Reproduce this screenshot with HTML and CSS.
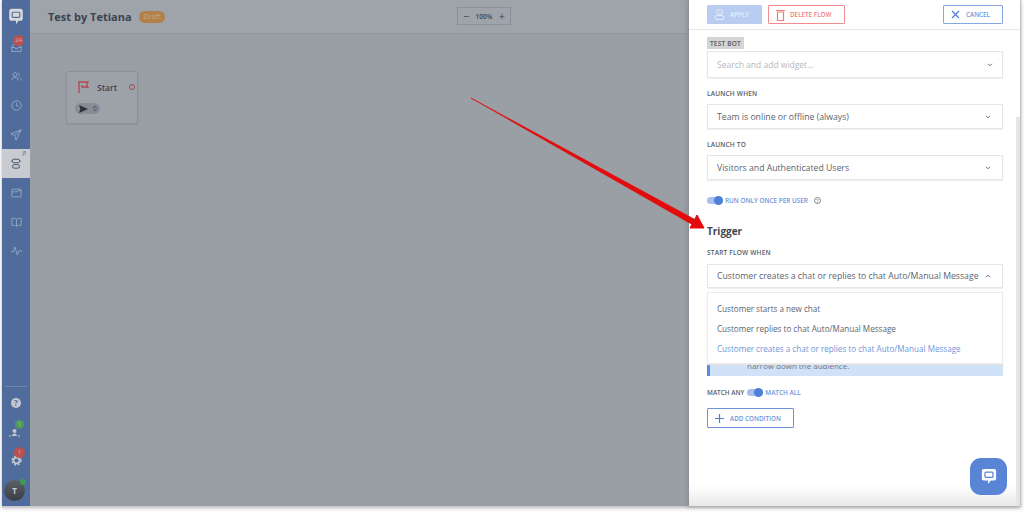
FILE: index.html
```html
<!DOCTYPE html>
<html>
<head>
  <meta charset="utf-8">
  <title>Test by Tetiana</title>
  <link rel="stylesheet" href="styles.css">
</head>
<body>
<div class="shot">

  <!-- left nav -->
  <div class="nav">
    <div class="nav-logo">
      <svg width="16" height="17" viewBox="0 0 18 20"><path d="M4 1h10a3 3 0 0 1 3 3v8a3 3 0 0 1-3 3h-2l-3 4v-4H4a3 3 0 0 1-3-3V4a3 3 0 0 1 3-3z" fill="#d5d8dc"/><rect x="4.500" y="5" width="9" height="6" rx="1" fill="none" stroke="#5a7196" stroke-width="1.400"/></svg>
    </div>
    <div class="nav-item">
      <svg width="11" height="11" viewBox="0 0 14 14" fill="none" stroke="#a5b3c9"><path d="M1 6l3-4h6l3 4v6H1zM1 7h4l1 2h2l1-2h4"/></svg>
      <span class="badge badge-red badge-inbox">24</span>
    </div>
    <div class="nav-item">
      <svg width="11" height="11" viewBox="0 0 14 14" fill="none" stroke="#a5b3c9"><circle cx="5" cy="4.500" r="2.500"/><path d="M1 12c0-3 2-4 4-4s4 1 4 4M9 2.200a2.500 2.500 0 0 1 0 4.600M11 8.500c1.300.5 2 1.600 2 3.500"/></svg>
    </div>
    <div class="nav-item">
      <svg width="11" height="11" viewBox="0 0 14 14" fill="none" stroke="#a5b3c9"><circle cx="7" cy="7" r="6"/><path d="M7 3.500V7l2.500 1.500"/></svg>
    </div>
    <div class="nav-item">
      <svg width="12" height="12" viewBox="0 0 15 15" fill="none" stroke="#a5b3c9"><path d="M14 1L1 6l5 2 1.500 6zM14 1L6 8"/></svg>
    </div>
    <div class="nav-item nav-active">
      <svg width="10" height="11" viewBox="0 0 14 15" fill="none" stroke="#4d5a6e" stroke-width="1.400"><rect x="2" y="1.500" width="10" height="5" rx="2"/><rect x="2" y="9" width="10" height="5" rx="2.500"/><path d="M0 4h2M12 4h2"/></svg>
      <span class="beta">&#946;</span>
    </div>
    <div class="nav-item">
      <svg width="11" height="10" viewBox="0 0 14 13" fill="none" stroke="#a5b3c9"><rect x="1" y="1.500" width="12" height="10" rx="1"/><path d="M1 5h7l1-1.500h4"/></svg>
    </div>
    <div class="nav-item">
      <svg width="11" height="10" viewBox="0 0 14 13" fill="none" stroke="#a5b3c9"><path d="M7 3C5.500 1.500 3 1.500 1 2v9c2-.5 4.500-.5 6 1 1.500-1.500 4-1.500 6-1V2c-2-.5-4.500-.5-6 1zM7 3v9"/></svg>
    </div>
    <div class="nav-item">
      <svg width="11" height="10" viewBox="0 0 14 12" fill="none" stroke="#a5b3c9"><path d="M0 7h3l2-6 3 10 2-5h4"/></svg>
    </div>

    <div class="nav-bottom">
      <div class="nav-small">
        <span class="help-dot">?</span>
      </div>
      <div class="nav-small">
        <svg class="person" width="11" height="8" viewBox="0 0 11 8" fill="#c3c8cf"><circle cx="5.500" cy="2" r="2"/><path d="M3 7c0-1.500 1-2.500 2.500-2.500S8 5.500 8 7zM0 6.500h2v1H0zM9 6.500h2v1H9z"/></svg>
        <span class="badge badge-green badge-low">1</span>
      </div>
      <div class="nav-small">
        <svg width="11" height="11" viewBox="0 0 13 13" fill="none" stroke="#c3c8cf"><circle cx="6.500" cy="6.500" r="3.500" stroke-width="2"/><circle cx="6.500" cy="6.500" r="5.200" stroke-width="1.800" stroke-dasharray="2.200 2"/></svg>
        <span class="badge badge-red badge-big">1</span>
      </div>
      <div class="avatar">T<span class="online"></span></div>
    </div>
  </div>

  <!-- flow editor -->
  <div class="editor">
    <div class="topbar">
      <span class="flow-title">Test by Tetiana</span>
      <span class="draft">Draft</span>
      <div class="zoom-box"><span class="zoom-sign">&minus;</span><span>100%</span><span class="zoom-sign">+</span></div>
    </div>
    <div class="canvas">
      <div class="node">
        <div class="node-head">
          <svg width="11" height="12" viewBox="0 0 11 12" fill="none" stroke="#b5474d" stroke-width="1.300"><path d="M1 12V1h9L8.500 3.500 10 6H4V4"/></svg>
          <span class="node-name">Start</span>
          <span class="node-port"></span>
        </div>
        <div class="node-stat">
          <svg width="9" height="8" viewBox="0 0 10 9" fill="#2e323a"><path d="M0 0l10 4.500L0 9l1.500-4.500z"/></svg>
          <span>0</span>
        </div>
      </div>
    </div>
  </div>

  <!-- settings panel -->
  <div class="panel">
    <div class="panel-head">
      <button class="btn btn-apply">
        <svg width="11" height="11" viewBox="0 0 11 11" fill="none" stroke="#e6edf9"><rect x="2.500" y="1" width="6" height="4" rx="1.500"/><rect x="1" y="6.500" width="9" height="4" rx="2"/></svg>
        APPLY
      </button>
      <button class="btn btn-delete">
        <svg width="9" height="12" viewBox="0 0 9 12" fill="none" stroke="#ef7c7c" stroke-width="1.200"><path d="M1.500 3h6v8.500h-6zM0 1.500h9"/></svg>
        DELETE FLOW
      </button>
      <button class="btn btn-cancel">
        <svg width="9" height="9" viewBox="0 0 9 9" fill="none" stroke="#4f7fd6" stroke-width="1.200"><path d="M1 1l7 7M8 1L1 8"/></svg>
        CANCEL
      </button>
    </div>

    <div class="panel-body">
      <div class="label label-tag">TEST BOT</div>
      <div class="select select-search">
        <span>Search and add widget...</span>
        <svg class="chev" width="6" height="4" viewBox="0 0 7 5" fill="none" stroke="#555c66" stroke-width="1.100"><path d="M1 1l2.500 2.500L6 1"/></svg>
      </div>

      <div class="label label-when">LAUNCH WHEN</div>
      <div class="select">
        <span>Team is online or offline (always)</span>
        <svg class="chev" width="6" height="4" viewBox="0 0 7 5" fill="none" stroke="#555c66" stroke-width="1.100"><path d="M1 1l2.500 2.500L6 1"/></svg>
      </div>

      <div class="label label-to">LAUNCH TO</div>
      <div class="select">
        <span>Visitors and Authenticated Users</span>
        <svg class="chev" width="6" height="4" viewBox="0 0 7 5" fill="none" stroke="#555c66" stroke-width="1.100"><path d="M1 1l2.500 2.500L6 1"/></svg>
      </div>

      <div class="toggle-row run-once">
        <span class="toggle"></span>
        <span class="toggle-on">RUN ONLY ONCE PER USER</span>
        <span class="hint">?</span>
      </div>

      <div class="section-title">Trigger</div>
      <div class="label label-start">START FLOW WHEN</div>
      <div class="select select-open">
        <span>Customer creates a chat or replies to chat Auto/Manual Message</span>
        <svg class="chev" width="6" height="4" viewBox="0 0 7 5" fill="none" stroke="#555c66" stroke-width="1.100"><path d="M1 4l2.500-2.500L6 4"/></svg>
      </div>

      <div class="dropdown-wrap">
        <div class="notice">narrow down the audience.</div>
        <div class="dropdown">
          <div class="option">Customer starts a new chat</div>
          <div class="option">Customer replies to chat Auto/Manual Message</div>
          <div class="option option-current">Customer creates a chat or replies to chat Auto/Manual Message</div>
        </div>
      </div>

      <div class="toggle-row match">
        <span class="match-any">MATCH ANY</span>
        <span class="toggle"></span>
        <span class="toggle-on">MATCH ALL</span>
      </div>

      <button class="btn btn-add">
        <svg width="9" height="9" viewBox="0 0 9 9" fill="none" stroke="#4f7fd6" stroke-width="1.200"><path d="M4.500 0v9M0 4.500h9"/></svg>
        ADD CONDITION
      </button>
    </div>
    <div class="scrollbar"></div>
  </div>

  <button class="chat-btn">
    <svg width="16" height="17" viewBox="0 0 18 19"><path d="M3 1h12a2 2 0 0 1 2 2v9a2 2 0 0 1-2 2h-4l-3 4v-4H3a2 2 0 0 1-2-2V3a2 2 0 0 1 2-2z" fill="#fff"/><rect x="4.500" y="4.500" width="9" height="6" rx="1" fill="none" stroke="#5a84d6" stroke-width="1.400"/></svg>
  </button>

  <!-- red annotation arrow -->
  <svg class="arrow" width="1024" height="512" viewBox="0 0 1024 512">
    <path d="M471 98 L695 219.500 L693 225 Z" fill="#e30b0b" stroke="#e30b0b" stroke-width="0.600"/>
    <path d="M697 215 L704 228 L690 228 Z" fill="#e30b0b" stroke="#e30b0b"/>
  </svg>
</div>
</body>
</html>
```

FILE: styles.css
```css
* { box-sizing: border-box; }

html, body { margin: 0; padding: 0; }

body { width: 1024px; height: 512px; overflow: hidden; background: #fbfbfb; font-family: "Open Sans", sans-serif; }

button { font-family: "Open Sans", sans-serif; }

.shot { position: relative; display: flex; width: 1019px; height: 507px; margin-left: 2px; background: #fff; border-bottom: 1px solid #c9c9c9; border-right: 1px solid #c9c9c9; box-shadow: 0 1px 3px #bbb; }

/* nav */
.nav { display: flex; flex-direction: column; width: 28px; flex: none; background: #4f6c9d; }
.nav-logo { display: flex; justify-content: center; align-items: center; height: 33px; }
.nav-item { position: relative; display: flex; justify-content: center; align-items: center; height: 29px; }
.nav-active { background: #c8cbcf; }
.beta { position: absolute; top: 0; right: 4px; font-size: 6px; color: #4f6c9d; }
.nav-bottom { margin: auto 3px 5px 3px; padding-top: 1px; border-top: 1px solid #6f86ab; }
.nav-small { position: relative; display: flex; justify-content: center; align-items: center; height: 29px; }
.help-dot { display: block; width: 10px; height: 10px; border-radius: 50%; background: #c3c8cf; color: #4f6c9d; font-size: 8px; line-height: 10px; font-weight: 700; text-align: center; }
.person { margin-left: -3px; margin-top: 3px; }

.badge { position: absolute; border-radius: 50%; color: #d8a9a5; font-size: 6px; text-align: center; }
.badge-red { background: #b9524f; }
.badge-green { background: #4f9a5e; color: #9fd0a8; }
.badge-inbox { top: 2px; left: 11px; width: 11px; height: 11px; line-height: 11px; }
.badge-low { top: 3px; left: 10px; width: 9px; height: 9px; line-height: 9px; }
.badge-big { top: 1px; left: 9px; width: 11px; height: 11px; line-height: 11px; }

.avatar { position: relative; width: 21px; height: 21px; margin: 5px 0 0 -1px; border-radius: 50%; background: linear-gradient(#5c6068, #3a3d44); color: #c8cacd; font-size: 8px; font-weight: 700; line-height: 21px; text-align: center; }
.online { position: absolute; top: -1px; right: -1px; width: 6px; height: 6px; border-radius: 50%; background: #3f9a55; }

/* editor */
.editor { display: flex; flex-direction: column; width: 659px; flex: none; background: #9b9fa6; }
.topbar { position: relative; display: flex; align-items: center; height: 34px; flex: none; padding-left: 18px; background: #9fa3aa; border-bottom: 1px solid #93979e; }
.flow-title { font-size: 11px; font-weight: 700; color: #3c4350; }
.draft { margin-left: 7px; padding: 0 5px; height: 12px; border-radius: 6px; background: #b3804a; color: #c9a684; font-size: 7px; line-height: 12px; }
.zoom-box { position: absolute; left: 427px; top: 7px; display: flex; align-items: center; justify-content: space-between; width: 54px; height: 18px; padding: 0 5px; border: 1px solid #8b8f96; color: #3e444f; font-size: 6.500px; font-weight: 600; }
.zoom-sign { font-size: 11px; font-weight: 400; line-height: 16px; }

.canvas { flex: 1; padding: 37px 0 0 36px; background-color: #9a9ea5; background-image: radial-gradient(#8f939a 0.6px, transparent 0.8px); background-size: 12px 12px; background-position: 4px 0; }
.node { width: 72px; height: 53px; padding: 9px 0 0 9px; border: 1px solid #8c9097; border-radius: 3px; background: #9da1a8; box-shadow: 0 1px 2px #8c9097; }
.node-head { display: flex; align-items: center; height: 12px; padding-left: 2px; }
.node-name { margin-left: 8px; font-size: 8.500px; font-weight: 600; color: #3c4350; }
.node-port { width: 6px; height: 6px; margin-left: 12px; border: 1.300px solid #a8474d; border-radius: 50%; }
.node-stat { display: flex; align-items: center; gap: 5px; width: 25px; height: 11px; margin: 10px 0 0 -1px; padding-left: 4px; border-radius: 6px; background: #888c93; color: #3c4350; font-size: 6.500px; }

/* panel */
.panel { position: relative; flex: 1; background: linear-gradient(#fff 485px, #e9e9e9); box-shadow: -2px 0 4px #8a8e95; }
.panel-head { display: flex; align-items: center; gap: 6px; height: 30px; padding: 0 17px 0 18px; border-bottom: 1px solid #e8e8e8; background: #fff; }
.btn { display: inline-flex; align-items: center; height: 19px; padding: 0; border: 1px solid; border-radius: 1px; background: #fff; font-size: 6.300px; font-weight: 600; }
.btn-apply { gap: 5px; width: 55px; padding-left: 6px; background: #b9cdf0; border-color: #b9cdf0; color: #e6edf9; }
.btn-delete { gap: 5px; width: 77px; padding-left: 7px; border-color: #ef8d8d; color: #ef7c7c; }
.btn-cancel { gap: 6px; width: 60px; margin-left: auto; padding-left: 7px; border-color: #87a7e3; color: #6f93d9; }
.btn-add { gap: 6px; width: 87px; height: 20px; margin-top: 11px; padding-left: 7px; border-color: #6f93d9; color: #6f93d9; }

.panel-body { padding: 7px 17px 0 18px; }
.label { font-size: 6.500px; font-weight: 600; color: #555c66; letter-spacing: 0.2px; line-height: 9px; }
.label-tag { width: 37px; height: 12px; padding: 2px 0 0 3px; background: #d4d4d4; }
.label-when { margin-top: 11px; margin-bottom: 6px; }
.label-to { margin-top: 11px; margin-bottom: 6px; }
.label-start { margin-top: 10px; margin-bottom: 7px; }

.select { display: flex; align-items: center; justify-content: space-between; height: 25px; padding: 0 11px 0 9px; border: 1px solid #e6e6e6; color: #5d636d; font-size: 8.700px; box-shadow: 0 1px 1px #f0f0f0; }
.select-search { height: 27px; margin-top: 2px; padding-right: 9px; color: #b5b8bd; font-size: 8.500px; }
.select-open { height: 24px; }

.toggle-row { display: flex; align-items: center; font-size: 6.400px; font-weight: 600; }
.toggle { position: relative; display: block; width: 16px; height: 7px; border-radius: 4px; background: #a8bfeb; }
.toggle:after { content: ""; position: absolute; right: 0; top: -1px; width: 9px; height: 9px; border-radius: 50%; background: #4f7fd6; }
.toggle-on { color: #6f93d9; }
.run-once { height: 9px; margin-top: 16px; }
.run-once .toggle { margin-right: 2px; }
.hint { width: 7px; height: 7px; margin-left: 6px; border: 1px solid #80858d; border-radius: 50%; color: #80858d; font-size: 5px; line-height: 6px; text-align: center; }
.section-title { margin-top: 19px; height: 14px; font-size: 10px; font-weight: 700; line-height: 14px; color: #3f4550; }

.dropdown-wrap { position: relative; height: 88px; padding-top: 8px; }
.notice { height: 80px; padding: 65px 0 0 37px; border-left: 3px solid #5f8ad9; background: #cfe2f8; color: #6c7480; font-size: 8px; line-height: 9px; }
.dropdown { position: absolute; left: 0; right: 0; top: 4px; height: 72px; padding-top: 6px; background: #fff; border: 1px solid #ececec; box-shadow: 0 1px 1px #e4e4e4; }
.option { height: 20px; padding-left: 9px; color: #5d636d; font-size: 8.100px; line-height: 20px; }
.option-current { color: #7096da; }

.match { height: 9px; margin-top: 12px; }
.match-any { margin-right: 3px; color: #555c66; }
.match .toggle { margin-right: 2px; }

.scrollbar { position: absolute; right: 0; top: 117px; width: 4px; height: 389px; background: #e6e6e6; }

.chat-btn { position: absolute; left: 968px; top: 458px; display: flex; justify-content: center; align-items: center; width: 37px; height: 37px; padding: 0; border: 0; border-radius: 11px; background: #5a84d6; }

.arrow { position: absolute; left: -2px; top: 0; pointer-events: none; }
```
